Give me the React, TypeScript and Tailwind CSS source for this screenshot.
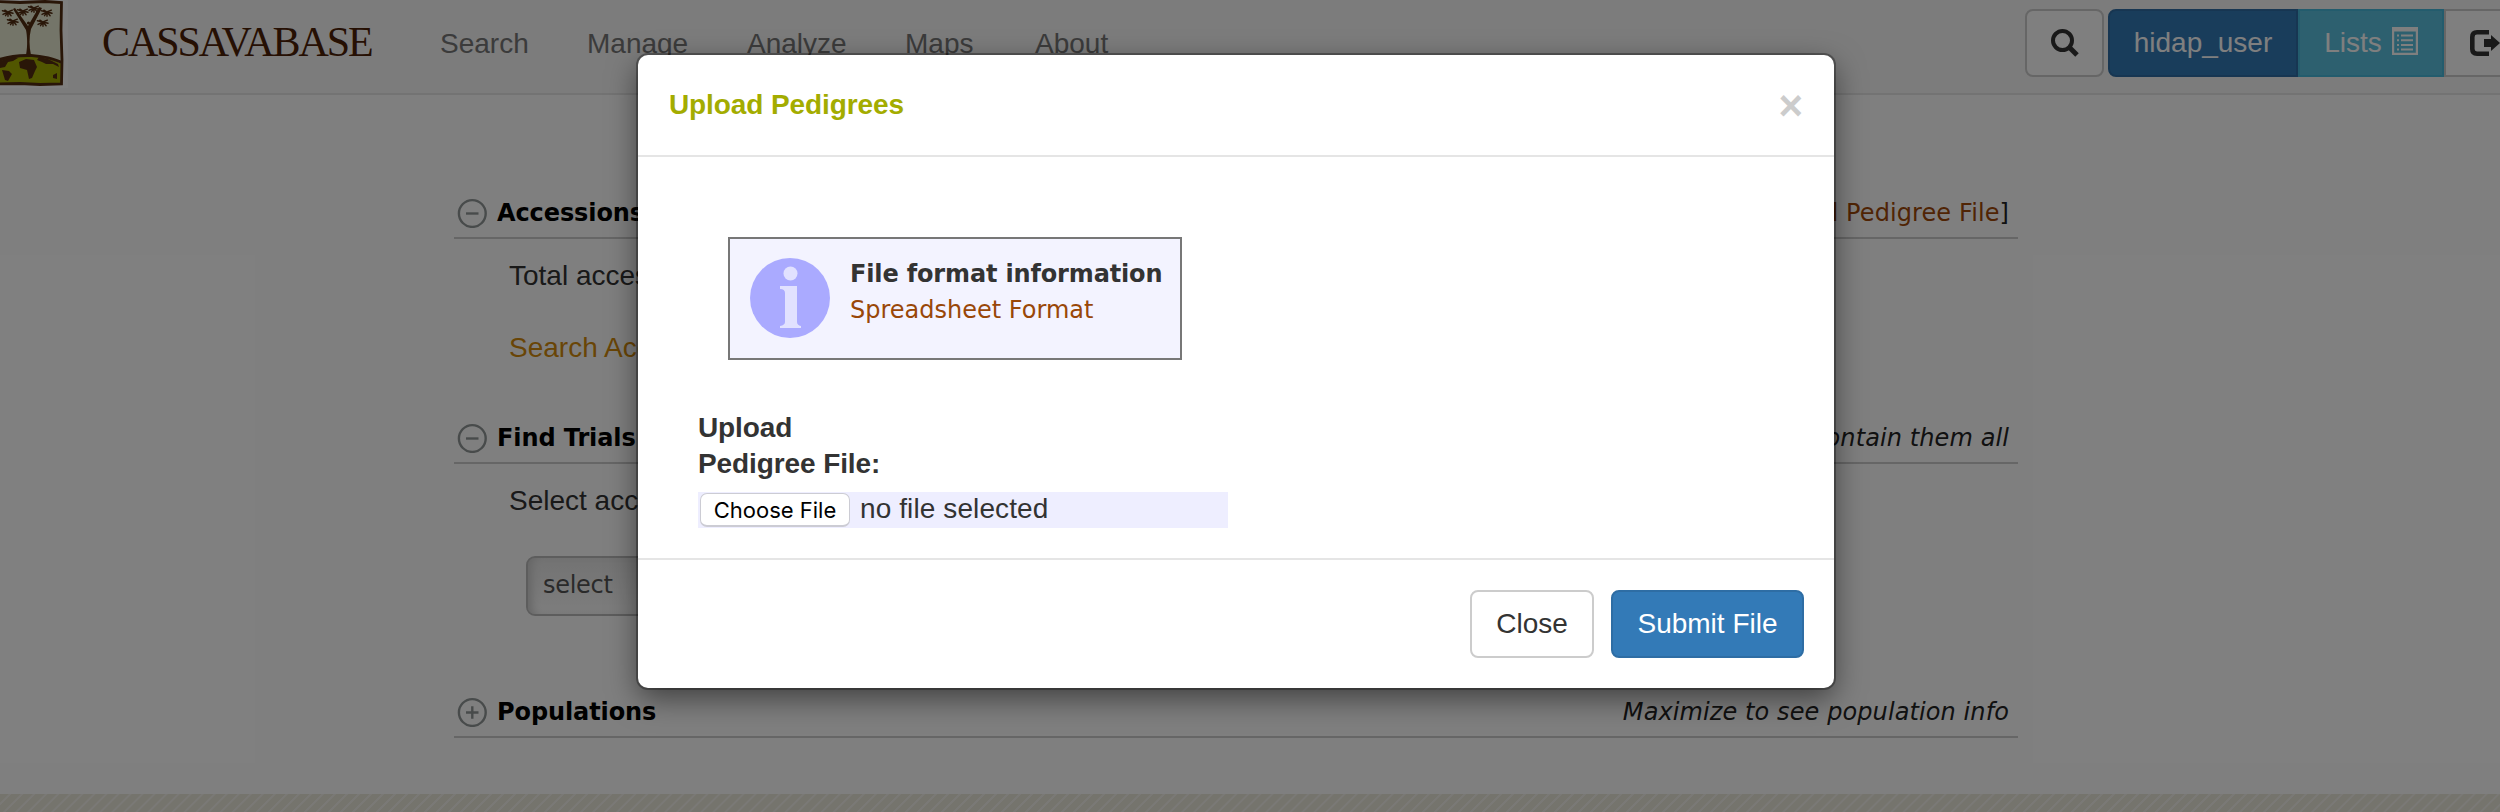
import { ReactNode } from "react";

const sans = "font-['Liberation_Sans',Arial,sans-serif]";
const verdana = "font-['DejaVu_Sans',Verdana,sans-serif]";

function Logo() {
  const leaf = "M0 0L-9 -2M0 0L-8 4M0 0L-4 6M0 0L0 7M0 0L5 6M0 0L8 2M0 0L7 -3M0 0L-5 -3";
  return (
    <svg className="block h-[88px] w-[68px] shrink-0" viewBox="0 0 68 88">
      <rect width="68" height="88" fill="#ffffff" />
      <path d="M-4 2L20 3L45 2L61 3L61 40L61 84L30 83L-4 84Z" fill="#e9ebd2" />
      <path d="M-4 63C10 57 20 55 30 55C42 56 52 59 62 64V84H-4Z" fill="#a3ac00" />
      <path d="M-4 59C14 53 38 51 62 61L62 64C38 54 14 56 -4 63Z" fill="#532c10" />
      <path d="M19 62L26 59L34 60L37 67L35 71L32 78L29 79L27 70L20 68ZM0 61L12 57L18 58L13 61L8 62L5 67L0 68ZM2 70L9 71L12 74L8 81L5 80ZM39 57L48 59L58 64L59 67L53 64L46 64L42 62L37 60ZM53 75L57 73V79L53 78Z" fill="#532c10" />
      <path d="M26 55C28 45 27 35 26 30L13 9L15 8L28 26L39 7L42 8L31 29C29 37 29 46 31 55Z" fill="#532c10" />
      <circle cx="28.5" cy="23" r="1.6" fill="#532c10" />
      {[
        [8, 12], [23, 11], [34, 8], [47, 12], [13, 21], [43, 22],
      ].map(([x, y]) => (
        <path key={`${x}-${y}`} d={leaf} transform={`translate(${x} ${y}) scale(.62)`} stroke="#532c10" strokeWidth="2.3" strokeLinecap="round" fill="none" />
      ))}
      <path d="M-4 1.5L20 2.5L45 1.5L61.5 2.5L61 30L62 60L61.5 84L40 84.5L20 83.5L-4 84" fill="none" stroke="#532c10" strokeWidth="2.8" />
    </svg>
  );
}

function Toggle({ plus }: { plus?: boolean }) {
  return (
    <svg className="size-[30px] shrink-0" viewBox="0 0 30 30" fill="none" stroke="#919797" strokeWidth="2.4">
      <circle cx="15.3" cy="15.5" r="13.4" />
      <path d={plus ? "M9 15.5H21.5M15.3 9.2V21.7" : "M9 15.5H21.5"} />
    </svg>
  );
}

function SectionHead({ title, plus, children }: { title: string; plus?: boolean; children: ReactNode }) {
  return (
    <div className={`${verdana} flex h-[44px] items-start justify-between border-b-2 border-[#cccccc] pt-[3px] text-[24px] leading-[30px] text-[#222]`}>
      <div className="flex items-start pl-[3px]">
        <Toggle plus={plus} />
        <span className="ml-[10px] font-bold tracking-[-0.1px] whitespace-nowrap text-black">{title}</span>
      </div>
      <div className="pr-[9px] tracking-[0.1px] whitespace-nowrap">{children}</div>
    </div>
  );
}

function Navbar() {
  return (
    <nav className={`${sans} flex h-[95px] items-start border-b-2 border-[#e7e7e7] bg-[#f8f8f8] text-[28px] leading-[40px] text-[#777]`}>
      <Logo />
      <span className="mt-[16px] ml-[34px] w-[338px] font-['Liberation_Serif',serif] text-[42px] leading-[52px] tracking-[-2.1px] text-[#4c2106]">
        CASSAVABASE
      </span>
      <div className="mt-[24px] flex">
        <span className="w-[147px]">Search</span>
        <span className="w-[160px]">Manage</span>
        <span className="w-[158px]">Analyze</span>
        <span className="w-[130px]">Maps</span>
        <span>About</span>
      </div>
      <div className="mt-[9px] ml-auto flex h-[68px] shrink-0">
        <div className="flex w-[79px] items-center justify-center rounded-[8px] border-2 border-[#ccc] bg-white">
          <svg className="size-[28px]" viewBox="0 0 28 28" fill="none" stroke="#333" strokeWidth="4">
            <circle cx="11.5" cy="11.5" r="9.5" />
            <path d="M18 18L26 26" strokeWidth="5" />
          </svg>
        </div>
        <div className="ml-[4px] flex w-[190px] items-center justify-center rounded-l-[8px] border-2 border-[#2e6da4] bg-[#337ab7] text-white">hidap_user</div>
        <div className="flex w-[146px] items-center justify-center gap-[10px] border-2 border-[#46b8da] bg-[#5bc0de] text-white">
          Lists
          <svg className="-mt-[4px] h-[28px] w-[26px]" viewBox="0 0 26 28" fill="#fff">
            <path fillRule="evenodd" d="M0 0H26V28H0ZM2.2 4.6V25.8H23.8V4.6Z" />
            <path d="M5 7.5h2v2H5zM5 12.3h2v2H5zM5 17h2v2H5zM5 21.5h2v2H5zM9 7.5h12v2H9zM9 12.3h12v2H9zM9 17h12v2H9zM9 21.5h12v2H9z" />
          </svg>
        </div>
        <div className="flex w-[56px] items-center overflow-hidden border-y-2 border-l-2 border-[#ccc] bg-white pl-[24px]">
          <svg className="h-[26px] w-[30px] shrink-0" viewBox="0 0 30 26" fill="none">
            <path d="M19 2.3H7Q2.3 2.3 2.3 7V19Q2.3 23.7 7 23.7H19" stroke="#333" strokeWidth="4.6" />
            <path d="M14 9H21V5L30 13L21 21V17H14Z" fill="#333" />
          </svg>
        </div>
      </div>
    </nav>
  );
}

function Page() {
  return (
    <div className="flex h-[812px] flex-col bg-white">
      <Navbar />
      <main className={`${sans} mx-auto h-[699px] w-[1592px] shrink-0 pt-[100px] pr-[28px] text-[28px] leading-[40px] text-[#333]`}>
        <SectionHead title="Accessions">
          [<span className="text-[#a04808]">Upload Pedigree File</span>]
        </SectionHead>
        <div className="h-[181px] pt-[17px] pl-[55px]">
          <p>Total accessions</p>
          <p className="mt-[32px] text-[#d38b0c]">Search Accessions</p>
        </div>
        <SectionHead title="Find Trials">
          <i>that contain them all</i>
        </SectionHead>
        <div className="h-[230px] pt-[17px] pl-[55px]">
          <p>Select access</p>
          <div className={`${verdana} mt-[35px] ml-[17px] h-[60px] w-[300px] rounded-[9px] border-2 border-[#bbb] bg-gradient-to-b from-[#e6e6e6] to-[#fbfbfb] pl-[15px] text-[24px] leading-[54px] tracking-[-0.3px] text-[#555] shadow-[inset_8px_0_8px_-4px_#ccc]`}>
            select
          </div>
        </div>
        <SectionHead title="Populations" plus>
          <i>Maximize to see population info</i>
        </SectionHead>
      </main>
      <div className="h-[18px] shrink-0 bg-[repeating-linear-gradient(135deg,#ebe8da_0px,#ebe8da_6px,#f5f3ec_6.5px,#f5f3ec_8px,#ebe8da_8.5px)]" />
    </div>
  );
}

function Modal() {
  return (
    <div className={`${sans} absolute top-[55px] left-[638px] flex h-[633px] w-[1196px] flex-col rounded-[10px] bg-white text-[28px] leading-[36px] text-[#333] shadow-[0_0_0_2px_rgba(0,0,0,0.3),0_10px_30px_rgba(0,0,0,0.5)]`}>
      <header className="flex h-[102px] shrink-0 items-start justify-between border-b-2 border-[#e5e5e5] pr-[31px] pl-[31px]">
        <h4 className="mt-[32px] font-bold tracking-[-0.1px] text-[#a3ac00]">Upload Pedigrees</h4>
        <span className="mt-[30px] text-[42px] leading-[42px] font-bold text-[#ccc]">×</span>
      </header>
      <div className="h-[401px] shrink-0 pt-[80px] pl-[60px]">
        <div className={`${verdana} ml-[30px] flex h-[123px] w-[454px] border-2 border-[#777] bg-[#f3f3ff] pt-[19px] pl-[20px] text-[24px] leading-[36px]`}>
          <svg className="size-[80px] shrink-0" viewBox="0 0 80 80">
            <circle cx="40" cy="40" r="40" fill="#aaaaff" />
            <g fill="#e1e1ff">
              <circle cx="40.5" cy="15.5" r="7" />
              <path d="M30 28H47V64Q47 67 51 68V70H30V68Q35 67 35 64V35Q35 31 30 31Z" />
            </g>
          </svg>
          <div className="-mt-[2px] ml-[20px] whitespace-nowrap">
            <div className="font-bold tracking-[-0.15px]">File format information</div>
            <div className="text-[#994708]">Spreadsheet Format</div>
          </div>
        </div>
        <div className="mt-[50px] font-bold tracking-[-0.1px]">
          Upload
          <br />
          Pedigree File:
        </div>
        <div className="mt-[10px] flex h-[36px] w-[530px] items-start bg-[#eeeeff] pt-[1px] pl-[2px]">
          <span className="flex h-[34px] w-[150px] items-center justify-center rounded-[7px] border border-b-2 border-[#ccccd4] bg-white font-['Inter',sans-serif] text-[22px] leading-[32px] text-black">
            Choose File
          </span>
          <span className="-mt-[2px] ml-[10px] tracking-[0.1px]">no file selected</span>
        </div>
      </div>
      <footer className="flex flex-1 items-start justify-end gap-[17px] border-t-2 border-[#e5e5e5] pt-[30px] pr-[30px] leading-[40px]">
        <button className="flex h-[68px] w-[124px] items-center justify-center rounded-[8px] border-2 border-[#ccc] bg-white pb-[1px]">Close</button>
        <button className="flex h-[68px] w-[193px] items-center justify-center rounded-[8px] border-2 border-[#2e6da4] bg-[#337ab7] pb-[1px] text-white">Submit File</button>
      </footer>
    </div>
  );
}

export default function App() {
  return (
    <div className="relative h-[812px] w-full overflow-hidden">
      <Page />
      <div className="absolute inset-0 bg-black/50" />
      <Modal />
    </div>
  );
}
